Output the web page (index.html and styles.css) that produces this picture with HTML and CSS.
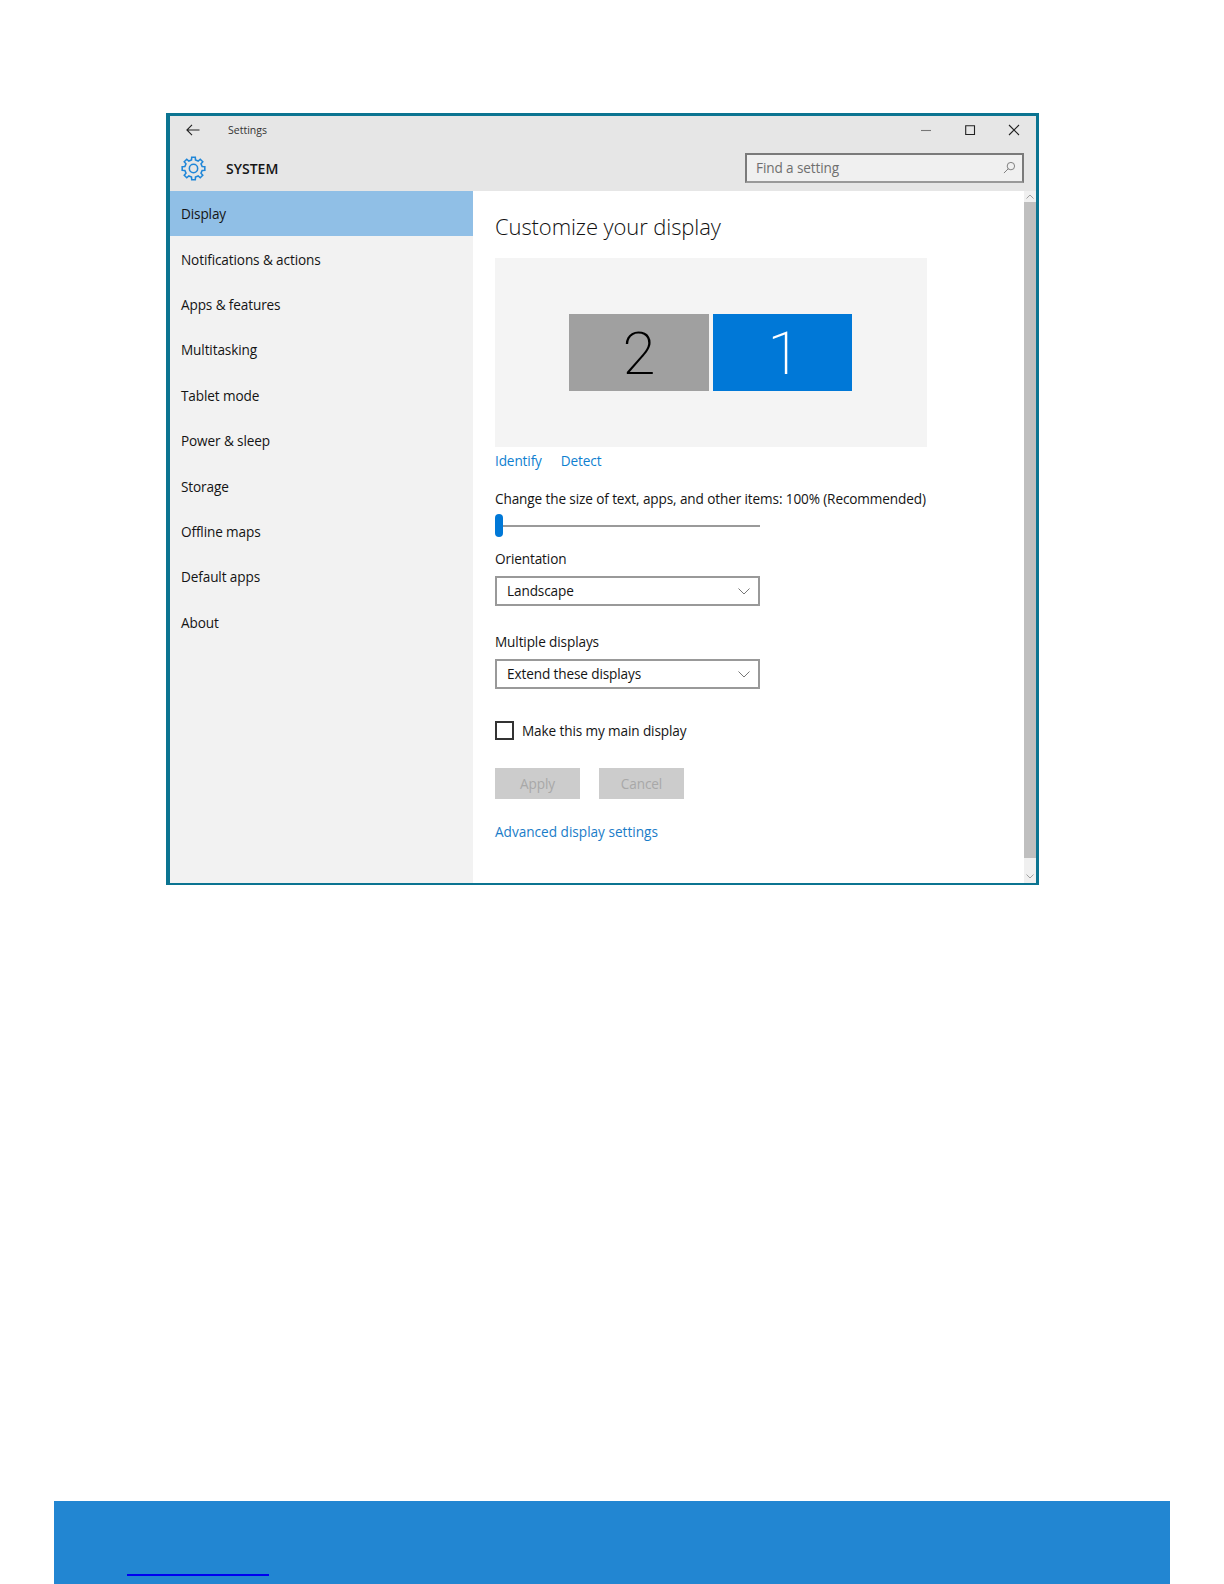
FILE: index.html
```html
<!DOCTYPE html>
<html lang="en">
<head>
<meta charset="utf-8">
<title>Settings</title>
<link rel="stylesheet" href="styles.css">
</head>
<body>
<div class="page">
  <section class="window">
    <header class="header">
      <div class="titlebar">
        <svg class="back" viewBox="0 0 14 12"><path d="M13.5 6H1M6 .8 .9 6 6 11.2"/></svg>
        <span class="apptitle">Settings</span>
        <div class="controls">
          <svg class="ctl" viewBox="0 0 12 12"><path d="M1 6.5h10"/></svg>
          <svg class="ctl" viewBox="0 0 12 12"><path d="M1.700 1.700h8.800v8.800H1.700z"/></svg>
          <svg class="ctl" viewBox="0 0 12 12"><path d="M1 1l10 10M11 1 1 11"/></svg>
        </div>
      </div>
      <div class="sysbar">
        <svg class="gear" viewBox="0 0 24 24"><path d="M10.09 3.72 10.28 1.14H13.72L13.91 3.72 16.5 4.79 18.47 3.1 20.9 5.53 19.21 7.5 20.28 10.09 22.86 10.28V13.72L20.28 13.91 19.21 16.5 20.9 18.47 18.47 20.9 16.5 19.21 13.91 20.28 13.72 22.86H10.28L10.09 20.28 7.5 19.21 5.53 20.9 3.1 18.47 4.79 16.5 3.72 13.91 1.14 13.72V10.28L3.72 10.09 4.79 7.5 3.1 5.53 5.53 3.1 7.5 4.79Z"/><circle cx="12" cy="12" r="4"/></svg>
        <span class="systitle">SYSTEM</span>
        <div class="search">
          <span class="search-text">Find a setting</span>
          <svg class="search-icon" viewBox="0 0 14 14"><circle cx="8.500" cy="5.500" r="4"/><path d="M5.700 8.300 1 13"/></svg>
        </div>
      </div>
    </header>
    <div class="body">
      <nav class="sidebar">
        <div class="nav-item active">Display</div>
        <div class="nav-item">Notifications &amp; actions</div>
        <div class="nav-item">Apps &amp; features</div>
        <div class="nav-item">Multitasking</div>
        <div class="nav-item">Tablet mode</div>
        <div class="nav-item">Power &amp; sleep</div>
        <div class="nav-item">Storage</div>
        <div class="nav-item">Offline maps</div>
        <div class="nav-item">Default apps</div>
        <div class="nav-item">About</div>
      </nav>
      <main class="content">
        <h1 class="heading">Customize your display</h1>
        <div class="preview">
          <div class="monitor secondary">2</div>
          <div class="monitor primary">1</div>
        </div>
        <div class="links">
          <a class="link">Identify</a>
          <a class="link">Detect</a>
        </div>
        <div class="scale-label">Change the size of text, apps, and other items: 100% (Recommended)</div>
        <div class="slider"><span class="thumb"></span></div>
        <div class="label orientation">Orientation</div>
        <div class="select"><span>Landscape</span><svg class="chev" viewBox="0 0 12 7"><path d="M.5.500 6 6 11.500.500"/></svg></div>
        <div class="label multiple">Multiple displays</div>
        <div class="select"><span>Extend these displays</span><svg class="chev" viewBox="0 0 12 7"><path d="M.5.500 6 6 11.500.500"/></svg></div>
        <div class="check-row"><span class="check"></span><span>Make this my main display</span></div>
        <div class="buttons">
          <div class="btn">Apply</div>
          <div class="btn">Cancel</div>
        </div>
        <a class="link advanced">Advanced display settings</a>
      </main>
      <div class="scrollbar">
        <svg class="arrow" viewBox="0 0 8 5"><path d="M.5 4.500 4 1l3.500 3.500"/></svg>
        <div class="scroll-thumb"></div>
        <svg class="arrow arrow-down" viewBox="0 0 8 5"><path d="M.5.500 4 4 7.500.500"/></svg>
      </div>
    </div>
  </section>
  <footer class="footer"><a class="footer-link"></a></footer>
</div>
</body>
</html>
```
FILE: styles.css
```css
* { box-sizing: border-box; }
html, body { margin: 0; padding: 0; background: #fff; }
body { font-family: "Open Sans", "Noto Sans", sans-serif; color: #111; font-size: 13.6px; letter-spacing: -0.12px; }
.page { width: 1224px; height: 1584px; overflow: hidden; padding-top: 113px; display: flex; flex-direction: column; }
.window { width: 873px; height: 772px; margin-left: 166px; border: solid #0b7491; border-width: 3px 3px 2px 4px; background: #fff; display: flex; flex-direction: column; }
.header { height: 75px; background: #e6e6e6; flex: none; }
.titlebar { height: 29px; display: flex; align-items: center; padding-bottom: 2px; }
.back { width: 14px; height: 12px; margin-left: 16px; fill: none; stroke: #222; stroke-width: 1.100; }
.apptitle { font-size: 10.5px; letter-spacing: 0; margin-left: 28px; color: #333; }
.controls { margin-left: auto; display: flex; gap: 32px; padding-right: 16px; }
.ctl { width: 12px; height: 12px; fill: none; stroke: #222; stroke-width: 1.100; }
.controls .ctl:first-child { stroke: #777; }
.sysbar { height: 46px; display: flex; align-items: center; }
.gear { width: 25px; height: 25px; margin-left: 11px; fill: none; stroke: #1f86d8; stroke-width: 1.500; }
.systitle { font-size: 14px; letter-spacing: 0; font-weight: 600; margin-left: 20px; color: #151515; }
.search { margin-left: auto; width: 279px; height: 30px; border: 2px solid #7a7a7a; border-bottom-color: #999; background: #f0f0f0; display: flex; align-items: center; justify-content: space-between; padding: 0 6px 1px 9px; margin-right: 12px; }
.search-text { color: #6f6f6f; }
.search-icon { width: 13px; height: 13px; fill: none; stroke: #777; stroke-width: 1; }
.body { flex: 1; display: flex; min-height: 0; }
.sidebar { width: 303px; background: #f2f2f2; flex: none; }
.nav-item { height: 45.4px; padding-left: 11px; display: flex; align-items: center; color: #141414; }
.nav-item.active { background: #90bfe6; }
.content { flex: 1; padding-left: 22px; min-width: 0; display: flex; flex-direction: column; align-items: flex-start; }
.heading { margin: 19px 0 0; font-size: 22px; letter-spacing: -0.1px; line-height: 33px; font-weight: 300; color: #111; }
.preview { width: 432px; height: 189px; margin-top: 15px; background: #f4f4f4; display: flex; gap: 4px; padding: 56px 0 0 74px; }
.monitor { height: 77px; display: flex; align-items: center; justify-content: center; font-family: Roboto, sans-serif; font-weight: 200; font-size: 60px; letter-spacing: 0; padding-top: 2px; }
.secondary { width: 140px; background: #a0a0a0; color: #000; }
.primary { width: 139px; background: #0078d7; color: #fff; padding-left: 3px; }
.links { display: flex; gap: 19px; margin-top: 3px; height: 20px; align-items: center; }
.link { color: #0f7fd0; }
.scale-label { line-height: 20px; margin-top: 19px; white-space: nowrap; color: #141414; letter-spacing: -0.12px; }
.slider { width: 265px; height: 23px; margin-top: 5px; display: flex; align-items: center; background: linear-gradient(#9a9a9a, #9a9a9a) no-repeat 0 50% / 100% 2px; }
.thumb { width: 8px; height: 23px; border-radius: 4px; background: #0078d7; }
.label { line-height: 20px; color: #141414; }
.orientation { margin-top: 12px; }
.multiple { margin-top: 26px; }
.select { width: 265px; height: 30px; margin-top: 7px; border: 2px solid #999; display: flex; align-items: center; justify-content: space-between; padding: 0 8px 2px 10px; color: #141414; }
.chev { width: 12px; height: 7px; fill: none; stroke: #777; stroke-width: 1; margin-top: 2px; }
.check-row { display: flex; align-items: center; gap: 8px; margin-top: 32px; height: 19px; color: #141414; }
.check { width: 19px; height: 19px; border: 2px solid #333; background: #fff; }
.buttons { display: flex; gap: 19px; margin-top: 28px; }
.btn { width: 85px; height: 31px; background: #cccccc; color: #a8a8a8; display: flex; align-items: center; justify-content: center; }
.advanced { margin-top: 23px; line-height: 20px; letter-spacing: 0; color: #1a7cc8; }
.scrollbar { width: 12px; flex: none; background: #f0f0f0; display: flex; flex-direction: column; align-items: center; }
.scroll-thumb { width: 12px; height: 656px; background: #bfbfbf; flex: none; }
.arrow { width: 8px; height: 5px; fill: none; stroke: #a0a0a0; stroke-width: 1; margin: 3px 0; flex: none; }
.arrow-down { margin: auto 0 4px; }
.footer { width: 1116px; height: 83px; margin: auto 0 0 54px; background: #2286d2; flex: none; padding: 73px 0 0 73px; }
.footer-link { display: block; width: 142px; height: 2px; background: #0000f0; }
```
